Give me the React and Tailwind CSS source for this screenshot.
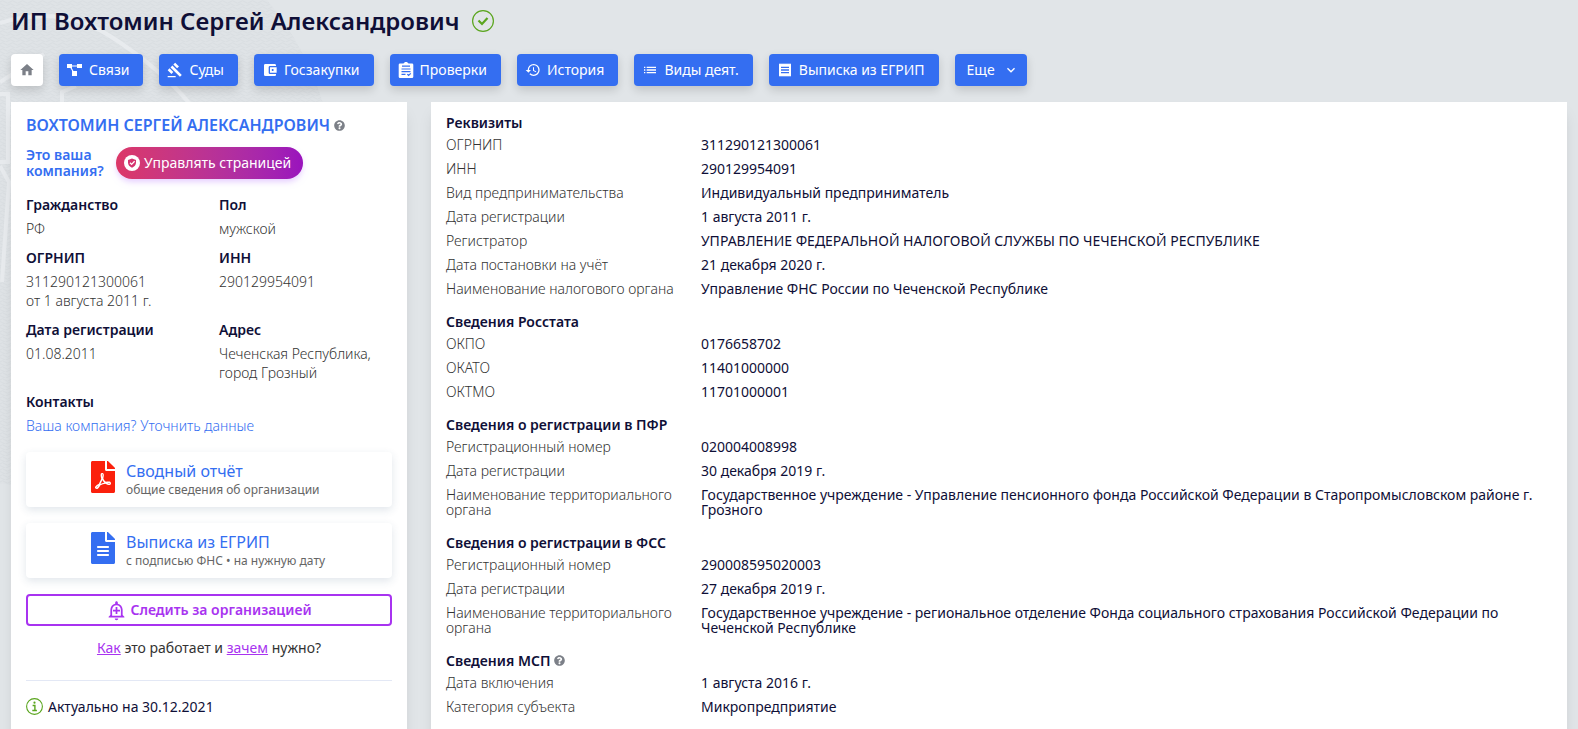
import {
  MdHome,
  MdGavel,
  MdAccountBalanceWallet,
  MdHistory,
  MdList,
  MdReceipt,
  MdKeyboardArrowDown,
  MdOutlineAddAlert,
} from 'react-icons/md';
import { FaQuestionCircle, FaFilePdf, FaFileAlt } from 'react-icons/fa';

const LinksIcon = ({ className }) => (
  <svg viewBox="0 0 16 16" fill="currentColor" className={className}>
    <path d="M0 2h5v4H0zM10 2h5v4h-5zM5 9h5v5H5z" />
    <path d="M4 4h7M3.5 5l3.5 6" stroke="currentColor" strokeWidth="1.2" fill="none" />
  </svg>
);

const ChecksIcon = ({ className }) => (
  <svg viewBox="0 0 16 16" className={className}>
    <path
      fill="currentColor"
      d="M2 1.5h3.5C6 .6 6.8 0 8 0s2 .6 2.5 1.5H14a1.3 1.3 0 0 1 1.3 1.3v11.9A1.3 1.3 0 0 1 14 16H2a1.3 1.3 0 0 1-1.3-1.3V2.8A1.3 1.3 0 0 1 2 1.5z"
    />
    <path
      d="M4 4.2h8M3.5 7h9M3.5 9.6h9M3.5 12.4h4M9.3 12.2l1.3 1.3 2.2-2.2"
      stroke="#346ef1"
      strokeWidth="1.2"
      fill="none"
    />
  </svg>
);

const ShieldIcon = ({ className }) => (
  <svg viewBox="0 0 16 16" className={className}>
    <circle cx="8" cy="8" r="8" fill="#fff" />
    <path d="M8 3.6l4 1.5v2.7c0 2.3-1.6 4-4 5-2.4-1-4-2.7-4-5V5.1z" fill="#d5336f" />
    <path d="M6 7.8l1.6 1.6L10.6 6.3" stroke="#fff" strokeWidth="1.3" fill="none" />
  </svg>
);

const CheckCircle = ({ className }) => (
  <svg viewBox="0 0 22 22" fill="none" stroke="#5aa51e" className={className}>
    <circle cx="11" cy="11" r="10.4" strokeWidth="1.2" />
    <path d="M6.5 10.5l3.5 3.5 5.5-6" strokeWidth="2.2" />
  </svg>
);

const InfoCircle = ({ className }) => (
  <svg viewBox="0 0 17 17" className={className}>
    <circle cx="8.5" cy="8.5" r="7.9" fill="none" stroke="#5aa51e" strokeWidth="1.1" />
    <circle cx="8.5" cy="4.7" r="1.1" fill="#5aa51e" />
    <path d="M6.6 7.5h2.3v4.8M6.3 12.5h4.6" fill="none" stroke="#5aa51e" strokeWidth="1.4" />
  </svg>
);

const navItems = [
  { label: 'Связи', icon: LinksIcon },
  { label: 'Суды', icon: MdGavel },
  { label: 'Госзакупки', icon: MdAccountBalanceWallet },
  { label: 'Проверки', icon: ChecksIcon },
  { label: 'История', icon: MdHistory },
  { label: 'Виды деят.', icon: MdList },
  { label: 'Выписка из ЕГРИП', icon: MdReceipt },
];

const facts = [
  { label: 'Гражданство', lines: ['РФ'] },
  { label: 'Пол', lines: ['мужской'] },
  { label: 'ОГРНИП', lines: ['311290121300061', 'от 1 августа 2011 г.'] },
  { label: 'ИНН', lines: ['290129954091'] },
  { label: 'Дата регистрации', lines: ['01.08.2011'] },
  { label: 'Адрес', lines: ['Чеченская Республика,', 'город Грозный'] },
];

const documents = [
  { title: 'Сводный отчёт', note: 'общие сведения об организации', icon: FaFilePdf, color: 'text-[#fb200c]' },
  { title: 'Выписка из ЕГРИП', note: 'с подписью ФНС • на нужную дату', icon: FaFileAlt, color: 'text-[#346ef1]' },
];

const sections = [
  {
    title: 'Реквизиты',
    rows: [
      ['ОГРНИП', '311290121300061'],
      ['ИНН', '290129954091'],
      ['Вид предпринимательства', 'Индивидуальный предприниматель'],
      ['Дата регистрации', '1 августа 2011 г.'],
      ['Регистратор', 'УПРАВЛЕНИЕ ФЕДЕРАЛЬНОЙ НАЛОГОВОЙ СЛУЖБЫ ПО ЧЕЧЕНСКОЙ РЕСПУБЛИКЕ'],
      ['Дата постановки на учёт', '21 декабря 2020 г.'],
      ['Наименование налогового органа', 'Управление ФНС России по Чеченской Республике'],
    ],
  },
  {
    title: 'Сведения Росстата',
    rows: [
      ['ОКПО', '0176658702'],
      ['ОКАТО', '11401000000'],
      ['ОКТМО', '11701000001'],
    ],
  },
  {
    title: 'Сведения о регистрации в ПФР',
    rows: [
      ['Регистрационный номер', '020004008998'],
      ['Дата регистрации', '30 декабря 2019 г.'],
      [
        'Наименование территориального органа',
        'Государственное учреждение - Управление пенсионного фонда Российской Федерации в Старопромысловском районе г. Грозного',
      ],
    ],
  },
  {
    title: 'Сведения о регистрации в ФСС',
    rows: [
      ['Регистрационный номер', '290008595020003'],
      ['Дата регистрации', '27 декабря 2019 г.'],
      [
        'Наименование территориального органа',
        'Государственное учреждение - региональное отделение Фонда социального страхования Российской Федерации по Чеченской Республике',
      ],
    ],
  },
  {
    title: 'Сведения МСП',
    help: true,
    rows: [
      ['Дата включения', '1 августа 2016 г.'],
      ['Категория субъекта', 'Микропредприятие'],
    ],
  },
];

function Backdrop() {
  return (
    <svg className="absolute top-0 left-0 -z-10" width="340" height="500" aria-hidden="true">
      <defs>
        <pattern id="waves" width="10" height="6" patternUnits="userSpaceOnUse">
          <path d="M0 2q2.5-2.5 5 0t5 0M-2 5q2.5-2.5 5 0t5 0t5 0" fill="none" stroke="#d8dce0" strokeWidth="0.9" />
        </pattern>
      </defs>
      <circle cx="40" cy="190" r="296" fill="#dfe3e6" />
      <circle cx="40" cy="190" r="296" fill="url(#waves)" />
      <g fill="none" stroke="#e8ebee" strokeWidth="4">
        <path d="M0 23Q60 4 110 36T190 104" />
        <path d="M0 82L44 54M0 94h8v68H0M62 104V92l14-6M0 166l9 16-7 100" />
      </g>
    </svg>
  );
}

export default function App() {
  return (
    <div className="relative isolate min-h-screen overflow-hidden bg-[#e1e5e8] px-[11px] font-['Noto_Sans',sans-serif] text-sm text-[#0f0f37]">
      <Backdrop />

      {/* Title */}
      <header className="flex items-center gap-3 pt-1">
        <h1 className="text-2xl leading-[34px] font-semibold">ИП Вохтомин Сергей Александрович</h1>
        <CheckCircle className="h-[22px] w-[22px]" />
      </header>

      {/* Navigation */}
      <nav className="mt-4 flex flex-wrap gap-4">
        <a
          href="#"
          aria-label="Главная"
          className="flex h-8 w-8 items-center justify-center rounded bg-white text-[#7c8088] shadow-[0_4px_10px_rgba(0,0,0,0.15)]"
        >
          <MdHome className="h-4 w-4" />
        </a>
        {navItems.map(({ label, icon: Icon }) => (
          <a
            key={label}
            href="#"
            className="flex h-8 items-center gap-[6px] rounded bg-[#346ef1] pr-[14px] pl-2 text-white shadow-[0_4px_10px_rgba(0,0,0,0.15)]"
          >
            <Icon className="h-4 w-4" />
            {label}
          </a>
        ))}
        <button
          type="button"
          className="flex h-8 items-center gap-2 rounded bg-[#346ef1] pr-2 pl-3 text-white shadow-[0_4px_10px_rgba(0,0,0,0.15)]"
        >
          Еще
          <MdKeyboardArrowDown className="h-4 w-4" />
        </button>
      </nav>

      <main className="mt-4 flex items-stretch gap-6">
        {/* Left card */}
        <aside className="w-[396px] shrink-0 bg-white px-[15px] pt-[13px] pb-6 shadow-lg">
          <h2 className="flex items-center gap-1 text-base leading-5 font-semibold text-[#346ef1]">
            ВОХТОМИН СЕРГЕЙ АЛЕКСАНДРОВИЧ
            <FaQuestionCircle className="h-[11px] w-[11px] text-[#7c8088]" />
          </h2>

          <div className="mt-3 flex items-center gap-3">
            <a href="#" className="w-[78px] leading-4 font-semibold text-[#346ef1]">
              Это ваша компания?
            </a>
            <button
              type="button"
              className="flex h-8 items-center gap-1 rounded-full bg-gradient-to-r from-[#dc3767] to-[#9a12bd] pr-3 pl-2 text-white shadow-md shadow-purple-200"
            >
              <ShieldIcon className="h-4 w-4" />
              Управлять страницей
            </button>
          </div>

          <dl className="mt-4 grid grid-cols-[193px_1fr] gap-y-[10px] leading-[19px]">
            {facts.map(({ label, lines }) => (
              <div key={label}>
                <dt className="font-semibold">{label}</dt>
                <dd className="mt-[5px] font-light text-[#333]">
                  {lines.map((line) => (
                    <div key={line}>{line}</div>
                  ))}
                </dd>
              </div>
            ))}
            <div className="col-span-2">
              <dt className="font-semibold">Контакты</dt>
              <dd className="mt-[5px] font-light text-[#346ef1]">
                <a href="#">Ваша компания? Уточнить данные</a>
              </dd>
            </div>
          </dl>

          <div className="mt-[17px] flex flex-col gap-4">
            {documents.map(({ title, note, icon: Icon, color }) => (
              <a key={title} href="#" className="block rounded py-[9px] shadow-[0_3px_8px_rgba(40,80,110,0.14)]">
                <div className="mx-auto flex w-[236px] items-start gap-[11px]">
                  <Icon className={`h-8 w-6 shrink-0 ${color}`} />
                  <div className="whitespace-nowrap">
                    <div className="text-base leading-5 text-[#346ef1]">{title}</div>
                    <div className="text-xs leading-[17px] text-[#666]">{note}</div>
                  </div>
                </div>
              </a>
            ))}
            <button
              type="button"
              className="flex h-8 items-center justify-center gap-[3px] rounded border-2 border-[#a833f0] font-semibold text-[#a833f0]"
            >
              <MdOutlineAddAlert className="h-[21px] w-[21px]" />
              Следить за организацией
            </button>
          </div>

          <p className="mt-3 text-center leading-5 text-[#333]">
            <a href="#" className="text-[#a833f0] underline">Как</a> это работает и{' '}
            <a href="#" className="text-[#a833f0] underline">зачем</a> нужно?
          </p>

          <div className="mt-[22px] flex items-center gap-[5px] border-t border-[#e3e8f5] pt-4 leading-[19px]">
            <InfoCircle className="h-[17px] w-[17px]" />
            Актуально на 30.12.2021
          </div>
        </aside>

        {/* Right card */}
        <div className="min-w-0 flex-1 bg-white px-[15px] pt-[13px] shadow-lg">
          {sections.map(({ title, help, rows }) => (
            <section key={title} className="mb-[9px]">
              <h3 className="mb-[7px] flex items-center gap-1 leading-[15px] font-semibold">
                {title}
                {help && <FaQuestionCircle className="h-[11px] w-[11px] text-[#7c8088]" />}
              </h3>
              <dl>
                {rows.map(([label, value]) => (
                  <div key={label} className="grid grid-cols-[240px_1fr] gap-[15px] pb-[9px] leading-[15px]">
                    <dt className="font-light text-[#333]">{label}</dt>
                    <dd>{value}</dd>
                  </div>
                ))}
              </dl>
            </section>
          ))}
        </div>
      </main>
    </div>
  );
}
